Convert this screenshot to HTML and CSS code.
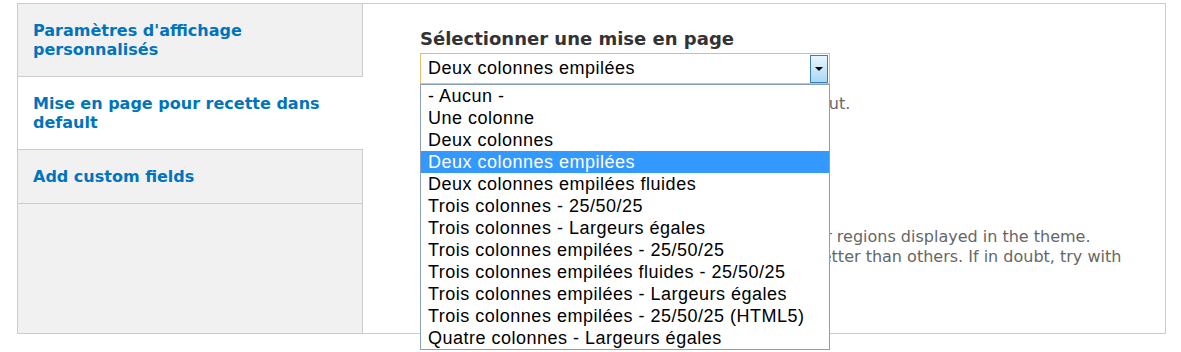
FILE: index.html
```html
<!DOCTYPE html>
<html lang="fr">
<head>
  <meta charset="UTF-8">
  <title>Mise en page</title>
  <link rel="stylesheet" href="styles.css">
</head>
<body>
  <div class="vtabs">
    <!-- Vertical tab list -->
    <ul class="vtabs-menu">
      <li class="vtab"><a href="#">Paramètres d'affichage personnalisés</a></li>
      <li class="vtab active"><a href="#">Mise en page pour recette dans default</a></li>
      <li class="vtab"><a href="#">Add custom fields</a></li>
    </ul>

    <!-- Pane content -->
    <div class="vtabs-pane">
      <div class="form-item">
        <label for="layout">Sélectionner une mise en page</label>
        <div class="select-wrap">
          <div class="select" id="layout">
            <span>Deux colonnes empilées</span>
            <span class="select-btn"><span class="arrow"></span></span>
          </div>
          <ul class="select-list">
            <li>- Aucun -</li>
            <li>Une colonne</li>
            <li>Deux colonnes</li>
            <li class="selected">Deux colonnes empilées</li>
            <li>Deux colonnes empilées fluides</li>
            <li>Trois colonnes - 25/50/25</li>
            <li>Trois colonnes - Largeurs égales</li>
            <li>Trois colonnes empilées - 25/50/25</li>
            <li>Trois colonnes empilées fluides - 25/50/25</li>
            <li>Trois colonnes empilées - Largeurs égales</li>
            <li>Trois colonnes empilées - 25/50/25 (HTML5)</li>
            <li>Quatre colonnes - Largeurs égales</li>
          </ul>
        </div>
        <div class="description">Choose the layout used for this content type's layout.</div>
      </div>

      <div class="form-item">
        <div class="description second">
          Layouts come with a different number of panels for regions displayed in the theme.<br>
          Some layouts will present your content so much better than others. If in doubt, try with<br>
          the default one.
        </div>
      </div>
    </div>
  </div>
</body>
</html>
```

FILE: styles.css
```css
body {
  margin: 0;
  padding: 3px 15px 0 17px;
  min-height: 349px;
  font-family: "DejaVu Sans", Verdana, sans-serif;
  background: white;
}

.vtabs {
  display: flex;
  height: 329px;
  border: 1px solid #ccc;
}

.vtabs-menu {
  list-style: none;
  margin: 0;
  padding: 0;
  width: 344px;
  background: #f1f1f1;
  border-right: 1px solid #ccc;
}

.vtab {
  border-bottom: 1px solid #ccc;
  padding: 17px 16px 17px 15px;
  line-height: 19px;
}

.vtab a {
  color: #0074bd;
  font-weight: bold;
  font-size: 16px;
  text-decoration: none;
}

.vtab.active {
  background: white;
  margin-right: -1px;
  padding-right: 17px;
}

.vtabs-pane {
  flex: 1;
  padding: 24px 20px 0 57px;
}

label {
  display: block;
  font-weight: bold;
  font-size: 18px;
  color: #333;
  margin-bottom: 4px;
}

.select-wrap {
  position: relative;
  width: 410px;
}

.select {
  height: 29px;
  border: 1px solid #e3c06a;
  display: flex;
  align-items: center;
  justify-content: space-between;
  padding-left: 7px;
  font-family: "Liberation Sans", Arial, sans-serif;
  font-size: 18px;
  letter-spacing: 0.5px;
  color: #000;
}

.select-btn {
  width: 16px;
  height: 26px;
  margin-right: 1px;
  border: 1px solid #3c7fb1;
  background: linear-gradient(#eaf6fd, #a7d9f5);
  display: flex;
  align-items: center;
  justify-content: center;
}

.arrow {
  width: 0;
  height: 0;
  border-left: 4px solid transparent;
  border-right: 4px solid transparent;
  border-top: 4px solid #000;
}

.select-list {
  position: absolute;
  top: 31px;
  left: 0;
  width: 408px;
  margin: 0;
  padding: 0;
  list-style: none;
  background: white;
  border: 1px solid #8aa0b8;
  font-family: "Liberation Sans", Arial, sans-serif;
  font-size: 18px;
  letter-spacing: 0.5px;
  z-index: 10;
}

.select-list li {
  height: 22px;
  line-height: 22px;
  padding-left: 7px;
  color: #000;
}

.select-list li.selected {
  background: #3399ff;
  color: white;
}

.description {
  font-size: 16px;
  color: #666;
  line-height: 20px;
  margin-top: 10px;
  white-space: nowrap;
}

.description.second {
  margin-top: 113px;
}
```
